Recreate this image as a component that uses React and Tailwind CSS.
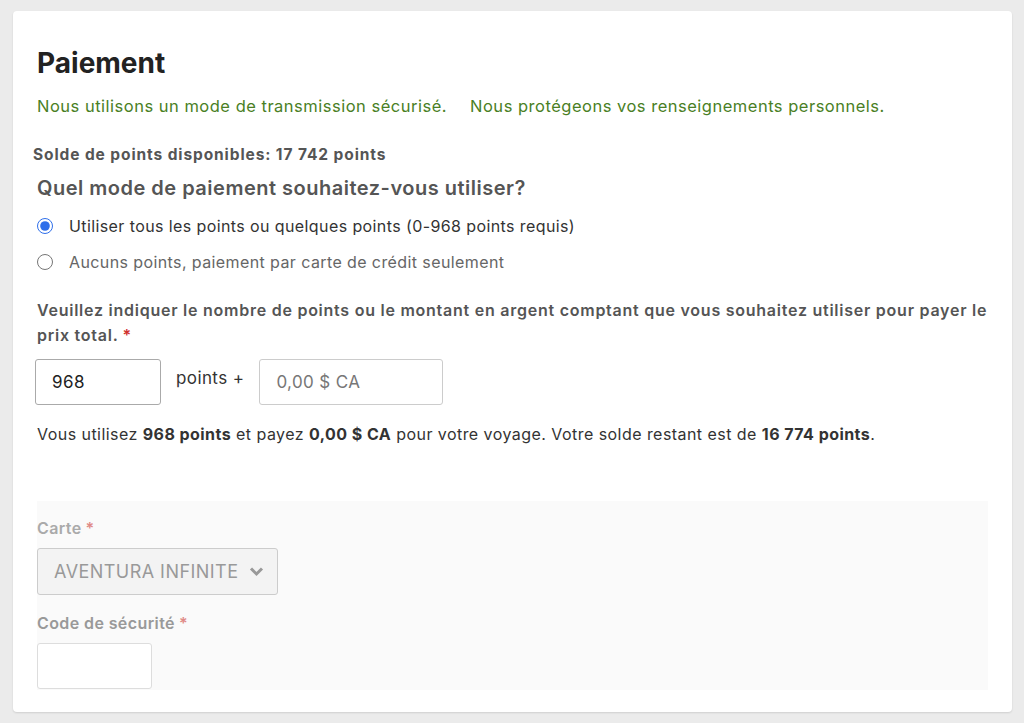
import React, { useState } from 'react';

export default function App() {
  const [mode, setMode] = useState('points');
  const [points, setPoints] = useState('968');

  return (
    <div className="min-h-[723px] bg-[#ebebeb] pt-[11px] pl-[13px] pr-[12px]" style={{ fontFamily: 'Inter, "Noto Sans", sans-serif' }}>
      <div className="bg-white rounded-[4px] shadow-[0_1px_2px_rgba(0,0,0,0.12)] pl-[24px] pr-[24px] pt-[34px] pb-[22px]">
        <h1 className="text-[28px] font-bold text-[#222] leading-[36px]">Paiement</h1>
        <div className="flex gap-[23px] mt-[13px] text-[16.5px] tracking-[0.5px] text-[#4a7f25] leading-[24px]">
          <span>Nous utilisons un mode de transmission sécurisé.</span>
          <span>Nous protégeons vos renseignements personnels.</span>
        </div>

        <p className="mt-[26px] -ml-[4px] text-[15.5px] font-bold tracking-[0.9px] text-[#555] leading-[22px]">Solde de points disponibles: 17 742 points</p>
        <h2 className="mt-[8px] text-[20px] font-semibold tracking-[0.5px] text-[#555] leading-[28px]">Quel mode de paiement souhaitez-vous utiliser?</h2>

        <div className="mt-[12px] flex flex-col gap-[12px] text-[16px] tracking-[0.4px] leading-[24px]">
          <label className="flex items-center gap-[16px] text-[#333]">
            <input type="radio" name="mode" checked={mode === 'points'} onChange={() => setMode('points')} className="m-0 w-[16px] h-[16px] accent-[#2f6fea]" />
            <span>Utiliser tous les points ou quelques points (0-968 points requis)</span>
          </label>
          <label className="flex items-center gap-[16px] text-[#666]">
            <input type="radio" name="mode" checked={mode === 'card'} onChange={() => setMode('card')} className="m-0 w-[16px] h-[16px]" />
            <span>Aucuns points, paiement par carte de crédit seulement</span>
          </label>
        </div>

        <p className="mt-[24px] text-[16px] font-semibold tracking-[0.75px] text-[#555] leading-[25px]">
          Veuillez indiquer le nombre de points ou le montant en argent comptant que vous souhaitez utiliser pour payer le prix total.<span className="ml-[4px] text-[#d0312d]">*</span>
        </p>

        <div className="mt-[11px] flex items-start gap-[15px] -ml-[2px]">
          <input value={points} onChange={(e) => setPoints(e.target.value)} className="w-[126px] h-[46px] border border-[#aaa] rounded-[3px] px-[16px] text-[17px] tracking-[0.4px] text-[#222] outline-none" />
          <span className="text-[17px] tracking-[0.4px] text-[#333] pt-[7px]">points +</span>
          <input placeholder="0,00 $ CA" className="w-[184px] h-[46px] border border-[#ccc] rounded-[3px] px-[16px] text-[17px] tracking-[0.4px] text-[#333] placeholder:text-[#777] outline-none" />
        </div>

        <p className="mt-[17px] text-[16px] tracking-[0.45px] text-[#333] leading-[24px]">
          Vous utilisez <b>968 points</b> et payez <b>0,00 $ CA</b> pour votre voyage. Votre solde restant est de <b>16 774 points</b>.
        </p>

        <div className="mt-[55px] bg-[#fafafa] pt-[15px] pb-[1px] w-[951px]">
          <p className="text-[16px] font-semibold tracking-[0.4px] text-[#aaa] leading-[24px]">Carte<span className="ml-[4px] text-[#e08a87]">*</span></p>
          <div className="mt-[8px] w-[241px] h-[47px] border border-[#ccc] rounded-[3px] bg-[#f3f3f3] flex items-center pl-[16px] pr-[13px] text-[18px] tracking-[0.45px] text-[#999]">
            <span>AVENTURA INFINITE</span>
            <svg width="15" height="11" viewBox="0 0 15 11" className="ml-auto"><path d="M2 2.5 L7.5 8 L13 2.5" fill="none" stroke="#999" strokeWidth="3" /></svg>
          </div>
          <p className="mt-[16px] text-[16px] font-semibold tracking-[0.4px] text-[#999] leading-[24px]">Code de sécurité<span className="ml-[4px] text-[#e08a87]">*</span></p>
          <input disabled className="mt-[8px] w-[115px] h-[46px] border border-[#ddd] rounded-[3px] bg-white" />
        </div>
      </div>
    </div>
  );
}
